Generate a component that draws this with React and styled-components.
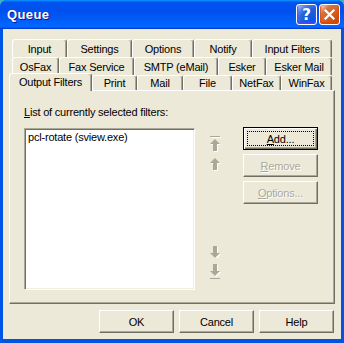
import React from "react";
import styled, { createGlobalStyle } from "styled-components";

const Global = createGlobalStyle`
  html, body {
    margin: 0;
    padding: 0;
    background: #3cb3c4;
  }
`

const Window = styled.div`
  width: 344px;
  height: 343px;
  box-sizing: border-box;
  display: flex;
  flex-direction: column;
  background: #0055e5;
  border-radius: 7px 7px 0 0;
  overflow: hidden;
  font-family: "Liberation Sans", Arial, sans-serif;
  font-size: 11px;
  letter-spacing: -0.2px;
  color: #000;`

const TitleBar = styled.div`
  height: 29px;
  flex-shrink: 0;
  display: flex;
  align-items: center;
  justify-content: space-between;
  padding: 0 4px 0 7px;
  background: linear-gradient(180deg, #0997ff, #0053ee 8%, #0050ee 40%, #06f 88%, #06f 93%, #005bff 95%, #003dd7 96%, #003dd7);`

const Title = styled.span`
  color: #fff;
  font-family: "Liberation Sans", Arial, sans-serif;
  font-weight: bold;
  font-size: 13px;
  letter-spacing: 0.4px;
  text-shadow: 1px 1px #0f1089;`

const Caption = styled.div`
  display: flex;
  gap: 2px;`

const CapButton = styled.div`
  width: 21px;
  height: 21px;
  box-sizing: border-box;
  border: 1px solid #fff;
  border-radius: 3px;
  display: flex;
  align-items: center;
  justify-content: center;
  color: #fff;
  font-family: "DejaVu Sans", sans-serif;
  font-weight: bold;
  font-size: 15px;
  background: ${p => p.$close
    ? "radial-gradient(circle at 90% 90%, #cc4600 0, #dc6527 55%, #cd7546 70%, #ffccb2 90%, #fff 100%)"
    : "radial-gradient(circle at 90% 90%, #0054e9 0, #2263d5 55%, #4479e4 70%, #a3bbec 90%, #fff 100%)"};
  box-shadow: inset 0 -1px 2px 1px ${p => p.$close ? "#da4600" : "#4646ff"};`

const Frame = styled.div`
  flex: 1;
  margin: 0 3px 4px 3px;
  background: #ece9d8;
  padding: 10px 6px 6px 6px;
  display: flex;
  flex-direction: column;`

const TabRow = styled.div`
  display: flex;
  align-items: flex-end;
  height: ${p => p.$h}px;
  padding-left: 3px;`

const Tab = styled.div`
  box-sizing: border-box;
  width: ${p => p.$w + (p.$active ? 3 : 0)}px;
  height: ${p => p.$active ? 18 : p.$h}px;
  margin-left: ${p => p.$active ? -3 : 0}px;
  margin-bottom: ${p => p.$active ? -1 : 0}px;
  position: ${p => p.$active ? "relative" : "static"};
  z-index: 2;
  padding-bottom: ${p => p.$active ? 2 : 0}px;
  display: flex;
  align-items: center;
  justify-content: center;
  background: #ece9d8;
  border-top: 1px solid #fff;
  border-left: 1px solid #fff;
  border-right: 1px solid #716f64;
  box-shadow: inset -1px 0 #aca899;
  border-radius: 3px 3px 0 0;
  white-space: nowrap;`

const Panel = styled.div`
  height: 214px;
  box-sizing: border-box;
  border: 1px solid;
  border-color: #fff #716f64 #716f64 #fff;
  box-shadow: inset -1px -1px #aca899;
  padding: 15px 0 0 14px;`

const Label = styled.div`
  height: 13px;
  line-height: 13px;
  margin-bottom: 9px;`

const Content = styled.div`
  display: flex;`

const ListBox = styled.div`
  width: 171px;
  height: 162px;
  box-sizing: border-box;
  background: #fff;
  border: 1px solid;
  border-color: #aca899 #fff #fff #aca899;
  box-shadow: inset 1px 1px #716f64, inset -1px -1px #f1efe2;
  padding: 1px 3px;`

const ListItem = styled.div`
  line-height: 13px;
  padding-top: 1px;`

const ArrowCol = styled.div`
  width: 48px;
  height: 162px;
  box-sizing: border-box;
  padding: 8px 0 11px 15px;
  display: flex;
  flex-direction: column;
  justify-content: space-between;`

const ArrowGroup = styled.div`
  display: flex;
  flex-direction: column;
  gap: ${p => p.$gap}px;`

const ButtonCol = styled.div`
  display: flex;
  flex-direction: column;
  gap: 4px;
  margin-top: -1px;`

const Button = styled.div`
  width: 75px;
  height: 23px;
  box-sizing: border-box;
  display: flex;
  align-items: center;
  justify-content: center;
  background: #ece9d8;
  border: 1px solid;
  border-color: ${p => p.$default ? "#000" : "#fff #716f64 #716f64 #fff"};
  box-shadow: ${p => p.$default
    ? "inset 1px 1px #fff, inset -1px -1px #716f64, inset -2px -2px #aca899"
    : "inset -1px -1px #aca899"};
  color: ${p => p.$disabled ? "#aca899" : "#000"};
  text-shadow: ${p => p.$disabled ? "1px 1px #fff" : "none"};`

const Focus = styled.div`
  width: 67px;
  height: 15px;
  box-sizing: border-box;
  border: 1px dotted #000;
  display: flex;
  align-items: center;
  justify-content: center;`

const Footer = styled.div`
  display: flex;
  justify-content: flex-end;
  gap: 5px;
  margin-top: 6px;
  padding-right: 1px;`

const Arrow = ({ down, bar }) => {
  const h = bar ? 17 : 13
  const top = bar ? 3 : 0
  const shape = (dx, dy, fill) => (
    <g fill={fill} transform={`translate(${dx} ${dy})`}>
      {bar && <rect x="0" y="0" width="10" height="1" />}
      <polygon points={`5,${top} 10,${top + 5} 0,${top + 5}`} />
      <rect x="3" y={top + 5} width="4" height="7" />
    </g>
  )
  return (
    <svg width="11" height={h} viewBox={`0 0 11 ${h}`}
      style={down ? { transform: "scaleY(-1)" } : undefined}>
      {shape(1, down ? -1 : 1, "#fff")}
      {shape(0, 0, "#aca899")}
    </svg>
  )
}

const rows = [
  { h: 18, tabs: [["Input", 55], ["Settings", 65], ["Options", 62], ["Notify", 58], ["Input Filters", 80]] },
  { h: 18, tabs: [["OsFax", 47], ["Fax Service", 75], ["SMTP (eMail)", 84], ["Esker", 48], ["Esker Mail", 66]] },
  { h: 15, tabs: [["Output Filters", 80, true], ["Print", 45], ["Mail", 46], ["File", 49], ["NetFax", 49], ["WinFax", 51]] },
]

const App = () => {
  return (
    <Window>
      <Global />
      <TitleBar>
        <Title>Queue</Title>
        <Caption>
          <CapButton>?</CapButton>
          <CapButton $close>
            <svg width="11" height="11" viewBox="0 0 11 11">
              <path d="M1.5 1.5 L9.5 9.5 M9.5 1.5 L1.5 9.5" stroke="#fff" strokeWidth="2.2" strokeLinecap="square" />
            </svg>
          </CapButton>
        </Caption>
      </TitleBar>
      <Frame>
        {rows.map((row, i) => (
          <TabRow key={i} $h={row.h}>
            {row.tabs.map(([name, w, active]) => (
              <Tab key={name} $w={w} $h={row.h} $active={active}>{name}</Tab>
            ))}
          </TabRow>
        ))}
        <Panel>
          <Label><u>L</u>ist of currently selected filters:</Label>
          <Content>
            <ListBox>
              <ListItem>pcl-rotate (sview.exe)</ListItem>
            </ListBox>
            <ArrowCol>
              <ArrowGroup $gap={5}>
                <Arrow bar />
                <Arrow />
              </ArrowGroup>
              <ArrowGroup $gap={4}>
                <Arrow down />
                <Arrow down bar />
              </ArrowGroup>
            </ArrowCol>
            <ButtonCol>
              <Button $default><Focus><u>A</u>dd...</Focus></Button>
              <Button $disabled><u>R</u>emove</Button>
              <Button $disabled><u>O</u>ptions...</Button>
            </ButtonCol>
          </Content>
        </Panel>
        <Footer>
          <Button>OK</Button>
          <Button>Cancel</Button>
          <Button>Help</Button>
        </Footer>
      </Frame>
    </Window>
  )
}

export default App
